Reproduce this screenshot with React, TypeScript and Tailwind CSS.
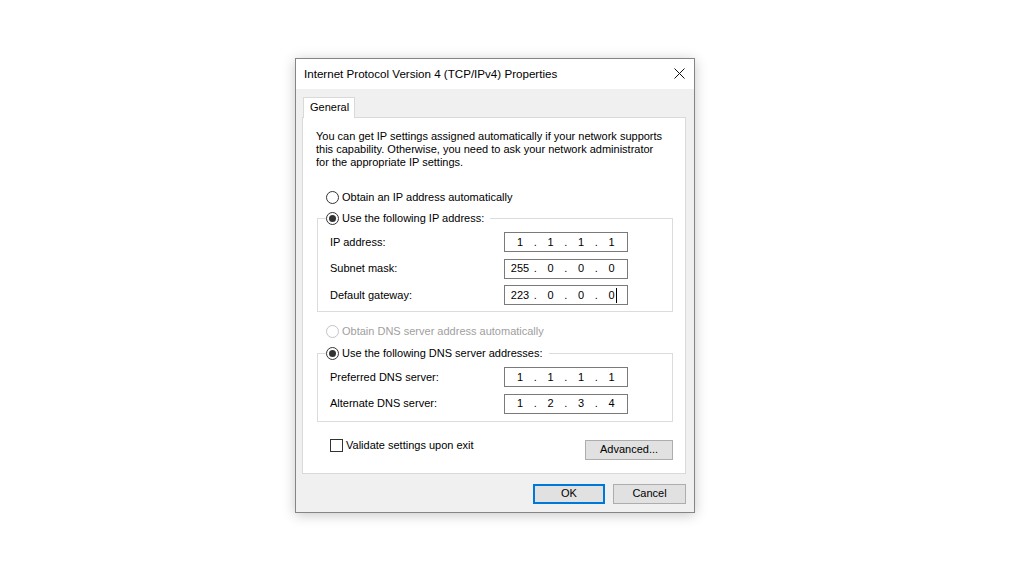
import React from 'react'

const font = { fontFamily: '"Liberation Sans", Arial, sans-serif' }

function Radio({ checked = false, disabled = false }: { checked?: boolean; disabled?: boolean }) {
  return (
    <span
      className={`flex h-[13px] w-[13px] shrink-0 items-center justify-center rounded-full border bg-white ${
        disabled ? 'border-[#c4c4c4]' : 'border-[#333333]'
      }`}
    >
      {checked && <span className="h-[7px] w-[7px] rounded-full bg-[#333333]" />}
    </span>
  )
}

function IpBox({ parts, caret = false }: { parts: string[]; caret?: boolean }) {
  return (
    <div className="flex h-[20px] w-[124px] items-center border border-[#7a7a7a] bg-white pl-[4px]">
      {parts.map((p, i) => (
        <React.Fragment key={i}>
          {i > 0 && <span className="w-[8.5px] text-center">.</span>}
          <span className="relative w-[22px] text-center">
            {p}
            {caret && i === 3 && (
              <span className="absolute right-[6px] top-[-1px] h-[15px] w-px bg-black" />
            )}
          </span>
        </React.Fragment>
      ))}
    </div>
  )
}

function Row({ label, parts, caret }: { label: string; parts: string[]; caret?: boolean }) {
  return (
    <div className="flex h-[20px] items-center pl-[4px]">
      <span className="w-[174px]">{label}</span>
      <IpBox parts={parts} caret={caret} />
    </div>
  )
}

function Button({ children, primary = false, className = '' }: { children: React.ReactNode; primary?: boolean; className?: string }) {
  return (
    <div
      className={`flex h-[20px] items-center justify-center bg-[#e1e1e1] ${
        primary ? 'border-2 border-[#0078d7]' : 'border border-[#adadad]'
      } ${className}`}
    >
      {children}
    </div>
  )
}

export default function App() {
  return (
    <div className="h-[574px] w-[1024px] overflow-hidden whitespace-nowrap bg-white pl-[295px] pt-[58px] text-[11px] leading-[13px] text-black" style={font}>
      <div className="w-[400px] border border-[#858585] bg-[#f0f0f0] shadow-[0_2px_12px_rgba(0,0,0,0.22)]">
        {/* title bar */}
        <div className="flex h-[30px] items-center justify-between bg-white pb-px pl-[8px] pr-[9px]">
          <span className="text-[11.6px]">Internet Protocol Version 4 (TCP/IPv4) Properties</span>
          <svg width="11" height="11" viewBox="0 0 11 11">
            <path d="M0.5 0.5 L10.5 10.5 M10.5 0.5 L0.5 10.5" stroke="#111" strokeWidth="1" />
          </svg>
        </div>

        <div className="pl-[6px] pr-[8px] pt-[8px] pb-[8px]">
          {/* tabs */}
          <div className="flex">
            <div className="relative z-10 -mb-px ml-px flex h-[21px] w-[52px] items-start border border-b-0 border-[#d9d9d9] bg-white pl-[6px] pt-[3px]">
              General
            </div>
          </div>

          {/* panel */}
          <div className="border border-[#d9d9d9] bg-white pb-[13px] pt-[12px]">
            <p className="pl-[13px]">
              You can get IP settings assigned automatically if your network supports
              <br />
              this capability. Otherwise, you need to ask your network administrator
              <br />
              for the appropriate IP settings.
            </p>

            <div className="mt-[21px] flex h-[14px] items-center gap-[3px] pl-[23px]">
              <Radio />
              <span>Obtain an IP address automatically</span>
            </div>

            <fieldset className="ml-[14px] mr-[12px] mt-[7px] border border-[#dcdcdc] pb-[6px] pl-[8px] pr-[8px]">
              <legend className="flex h-[14px] items-center gap-[3px] pr-[6px]">
                <Radio checked />
                <span>Use the following IP address:</span>
              </legend>
              <div className="flex flex-col gap-[6.5px] pt-[7px]">
                <Row label="IP address:" parts={['1', '1', '1', '1']} />
                <Row label="Subnet mask:" parts={['255', '0', '0', '0']} />
                <Row label="Default gateway:" parts={['223', '0', '0', '0']} caret />
              </div>
            </fieldset>

            <div className="mt-[12px] flex h-[14px] items-center gap-[3px] pl-[23px] text-[#a0a0a0]">
              <Radio disabled />
              <span>Obtain DNS server address automatically</span>
            </div>

            <fieldset className="ml-[14px] mr-[12px] mt-[8px] border border-[#dcdcdc] pb-[7px] pl-[8px] pr-[8px]">
              <legend className="flex h-[14px] items-center gap-[3px] pr-[6px]">
                <Radio checked />
                <span>Use the following DNS server addresses:</span>
              </legend>
              <div className="flex flex-col gap-[6.5px] pt-[7px]">
                <Row label="Preferred DNS server:" parts={['1', '1', '1', '1']} />
                <Row label="Alternate DNS server:" parts={['1', '2', '3', '4']} />
              </div>
            </fieldset>

            <div className="mt-[17px] flex items-start justify-between pl-[27px] pr-[12px]">
              <div className="flex items-center gap-[3px]">
                <span className="h-[13px] w-[13px] border border-[#333333] bg-white" />
                <span>Validate settings upon exit</span>
              </div>
              <Button className="mt-px w-[88px]">Advanced...</Button>
            </div>
          </div>

          {/* dialog buttons */}
          <div className="mt-[10px] flex justify-end gap-[8px]">
            <Button primary className="w-[72px]">OK</Button>
            <Button className="w-[73px]">Cancel</Button>
          </div>
        </div>
      </div>
    </div>
  )
}
